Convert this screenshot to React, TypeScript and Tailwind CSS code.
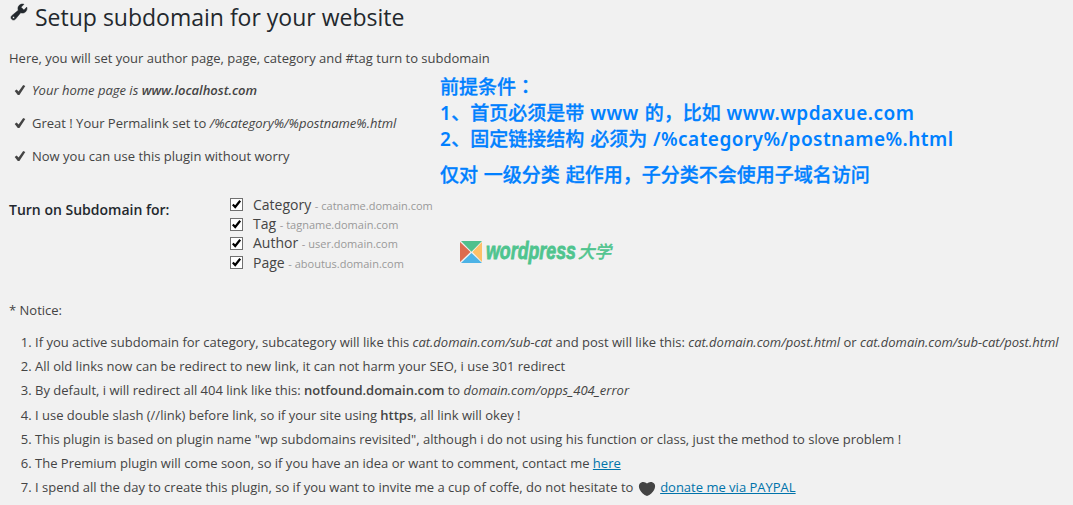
import React from "react";

const checks: React.ReactNode[] = [
  <em key="home">
    Your home page is <strong className="font-semibold">www.localhost.com</strong>
  </em>,
  <span key="permalink">
    Great ! Your Permalink set to <em>/%category%/%postname%.html</em>
  </span>,
  <span key="ready">Now you can use this plugin without worry</span>,
];

const subdomains = [
  { label: "Category", example: "catname.domain.com" },
  { label: "Tag", example: "tagname.domain.com" },
  { label: "Author", example: "user.domain.com" },
  { label: "Page", example: "aboutus.domain.com" },
];

function WrenchIcon() {
  return (
    <svg viewBox="0 0 20 20" className="h-5 w-5 shrink-0" fill="currentColor" stroke="currentColor" strokeWidth="0.5">
      <path d="M16.68 9.77c-1.34 1.34-3.3 1.67-4.95.99l-5.41 6.52c-.99.99-2.59.99-3.58 0s-.99-2.59 0-3.57l6.52-5.42c-.68-1.65-.35-3.61.99-4.95 1.28-1.28 3.12-1.62 4.72-1.06l-2.89 2.89 2.82 2.82 2.86-2.87c.53 1.58.18 3.39-1.08 4.65zM3.81 16.21c.4.39 1.04.39 1.43 0 .4-.4.4-1.04 0-1.43-.39-.4-1.03-.4-1.43 0-.39.39-.39 1.03 0 1.43z" />
    </svg>
  );
}

function TickIcon() {
  return (
    <svg viewBox="0 0 20 20" className="h-5 w-5 shrink-0" fill="currentColor">
      <path d="M14.2 4l2.1 1.1-5.9 8.900H8.800L5.700 10.100l1.900-1.500 2 2z" />
    </svg>
  );
}

function HeartIcon() {
  return (
    <svg viewBox="0 0 20 20" className="h-5 w-5 shrink-0" fill="currentColor">
      <path d="M10 17.12c3.33-1.4 5.74-3.79 7.04-6.21 1.28-2.41 1.46-4.81.32-6.25-1.03-1.29-2.37-1.78-3.73-1.74s-2.68.63-3.63 1.46c-.95-.83-2.27-1.42-3.63-1.46s-2.7.45-3.73 1.74c-1.14 1.44-.96 3.84.34 6.25 1.28 2.42 3.69 4.81 7.02 6.21z" />
    </svg>
  );
}

function CheckedBox() {
  return (
    <svg viewBox="0 0 13 13" className="h-[13px] w-[13px] shrink-0">
      <rect x="0.5" y="0.5" width="12" height="12" fill="#fff" stroke="#707070" />
      <path d="M2.800 6.500 5.200 9 10.200 2.800" fill="none" stroke="#000" strokeWidth="2.2" />
    </svg>
  );
}

function Logo() {
  return (
    <svg viewBox="0 0 160 40" className="h-10 w-[160px]">
      <path d="M1 9h21L11.500 19.800z" fill="#4fc08d" />
      <path d="M0 10v20l10.500-10z" fill="#dd6b4f" />
      <path d="M22 10v20l-9.500-10z" fill="#fdc068" />
      <path d="M1 31h21L11.500 21z" fill="#4db3e6" />
      <text
        x="26"
        y="27"
        textLength="90"
        lengthAdjust="spacingAndGlyphs"
        fill="#4fc48e"
        stroke="#4fc48e"
        strokeWidth="0.8"
        fontSize="23"
        fontWeight="700"
        fontStyle="italic"
        fontFamily="'Liberation Sans Narrow', 'Liberation Sans', sans-serif"
      >
        wordpress
      </text>
      <text
        x="118"
        y="26"
        textLength="33"
        lengthAdjust="spacingAndGlyphs"
        fill="#4fc48e"
        stroke="#4fc48e"
        strokeWidth="0.6"
        fontSize="17"
        fontStyle="italic"
        fontFamily="'Noto Sans CJK SC', sans-serif"
      >
        大学
      </text>
    </svg>
  );
}

function Latin({ children }: { children: React.ReactNode }) {
  return <span className="font-semibold tracking-[0.45px] [-webkit-text-stroke:0px]">{children}</span>;
}

function Notes() {
  return (
    <div className="flex flex-col font-['Noto_Sans','Noto_Sans_CJK_SC',sans-serif] text-[19px] leading-[26px] font-medium [word-spacing:0.9px] whitespace-nowrap text-[#0080ff] [-webkit-text-stroke:0.3px_#0080ff]">
      <p>
        前提条件<span className="font-['Noto_Sans_CJK_TC',sans-serif]">：</span>
      </p>
      <p>
        <Latin>1</Latin>、首页必须是带 <Latin>www</Latin> 的，比如 <Latin>www.wpdaxue.com</Latin>
      </p>
      <p>
        <Latin>2</Latin>、固定链接结构 必须为 <Latin>/%category%/postname%.html</Latin>
      </p>
      <p className="mt-[10px]">仅对 一级分类 起作用，子分类不会使用子域名访问</p>
    </div>
  );
}

export default function App() {
  return (
    <main className="h-[505px] w-[1073px] overflow-hidden bg-[#f1f1f1] font-['Open_Sans',sans-serif] text-[13px] text-[#444]">
      <h2 className="flex h-[49px] items-start pl-[9px] text-[#23282d]">
        <span className="pt-[2px]">
          <WrenchIcon />
        </span>
        <span className="pt-[2px] pl-[6px] text-[23px] leading-[31px]">
          Setup subdomain for your website
        </span>
      </h2>
      <p className="pl-[9px] leading-[19px]">
        Here, you will set your author page, page, category and #tag turn to subdomain
      </p>

      {/* Status checks with the notes beside them */}
      <div className="flex h-[127px] pt-[5px]">
        <ul className="w-[440px] pt-px pl-[9px]">
          {checks.map((check, index) => (
            <li key={index} className="flex h-[33px] items-center">
              <TickIcon />
              <span className="pl-[3px]">{check}</span>
            </li>
          ))}
        </ul>
        <Notes />
      </div>

      {/* Subdomain options */}
      <div className="flex h-[105px] pl-[9px]">
        <h3 className="w-[221px] pt-[5px] text-[14px] leading-[20px] font-semibold text-[#23282d]">
          Turn on Subdomain for:
        </h3>
        <div className="w-[230px]">
          {subdomains.map((item) => (
            <label key={item.label} className="flex h-[19.4px] items-center">
              <CheckedBox />
              <span className="pl-[10px] text-[14px] leading-[19px]">
                {item.label} <small className="text-[11px] text-[#999]">- {item.example}</small>
              </span>
            </label>
          ))}
        </div>
        <div className="pt-[37px]">
          <Logo />
        </div>
      </div>

      <p className="pl-[9px] leading-[20px]">* Notice:</p>

      <ol className="list-decimal pt-[10px] pl-[35px] leading-[24.17px] whitespace-nowrap">
        <li>
          If you active subdomain for category, subcategory will like this <em>cat.domain.com/sub-cat</em> and
          post will like this: <em>cat.domain.com/post.html</em> or <em>cat.domain.com/sub-cat/post.html</em>
        </li>
        <li>All old links now can be redirect to new link, it can not harm your SEO, i use 301 redirect</li>
        <li>
          By default, i will redirect all 404 link like this: <strong className="font-semibold">notfound.domain.com</strong> to{" "}
          <em>domain.com/opps_404_error</em>
        </li>
        <li>
          I use double slash (//link) before link, so if your site using <strong className="font-semibold">https</strong>, all link
          will okey !
        </li>
        <li>
          This plugin is based on plugin name "wp subdomains revisited", although i do not using his function or
          class, just the method to slove problem !
        </li>
        <li>
          The Premium plugin will come soon, so if you have an idea or want to comment, contact me{" "}
          <a href="#" className="text-[#0073aa] underline">here</a>
        </li>
        <li>
          I spend all the day to create this plugin, so if you want to invite me a cup of coffe, do not hesitate to{" "}
          <span className="inline-flex h-5 align-middle"><HeartIcon /></span>{" "}
          <a href="#" className="text-[#0073aa] underline">donate me via PAYPAL</a>
        </li>
      </ol>
    </main>
  );
}
